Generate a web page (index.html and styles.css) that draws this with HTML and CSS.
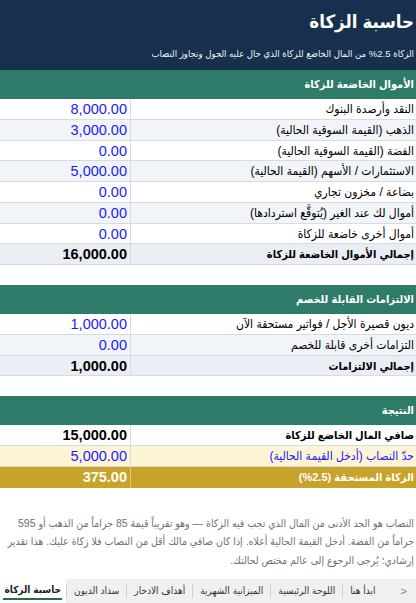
FILE: index.html
```html
<!DOCTYPE html>
<html lang="ar" dir="rtl">
<head>
<meta charset="utf-8">
<title>حاسبة الزكاة</title>
<link rel="stylesheet" href="styles.css">
</head>
<body>
<header class="hero">
  <h1 class="hero-title">حاسبة الزكاة</h1>
  <p class="hero-sub">الزكاة 2.5% من المال الخاضع للزكاة الذي حال عليه الحول وتجاوز النصاب</p>
</header>

<section class="block">
  <div class="block-head">الأموال الخاضعة للزكاة</div>
  <div class="row"><span class="label">النقد وأرصدة البنوك</span><span class="val input">8,000.00</span></div>
  <div class="row alt"><span class="label">الذهب (القيمة السوقية الحالية)</span><span class="val input">3,000.00</span></div>
  <div class="row"><span class="label">الفضة (القيمة السوقية الحالية)</span><span class="val input">0.00</span></div>
  <div class="row alt"><span class="label">الاستثمارات / الأسهم (القيمة الحالية)</span><span class="val input">5,000.00</span></div>
  <div class="row"><span class="label">بضاعة / مخزون تجاري</span><span class="val input">0.00</span></div>
  <div class="row alt"><span class="label">أموال لك عند الغير (يُتوقَّع استردادها)</span><span class="val input">0.00</span></div>
  <div class="row"><span class="label">أموال أخرى خاضعة للزكاة</span><span class="val input">0.00</span></div>
  <div class="row total"><span class="label">إجمالي الأموال الخاضعة للزكاة</span><span class="val">16,000.00</span></div>
</section>

<section class="block">
  <div class="block-head">الالتزامات القابلة للخصم</div>
  <div class="row"><span class="label">ديون قصيرة الأجل / فواتير مستحقة الآن</span><span class="val input">1,000.00</span></div>
  <div class="row alt"><span class="label">التزامات أخرى قابلة للخصم</span><span class="val input">0.00</span></div>
  <div class="row total"><span class="label">إجمالي الالتزامات</span><span class="val">1,000.00</span></div>
</section>

<section class="block">
  <div class="block-head">النتيجة</div>
  <div class="row net"><span class="label">صافي المال الخاضع للزكاة</span><span class="val">15,000.00</span></div>
  <div class="row nisab"><span class="label">حدّ النصاب (أدخل القيمة الحالية)</span><span class="val input">5,000.00</span></div>
  <div class="row due"><span class="label">الزكاة المستحقة (2.5%)</span><span class="val">375.00</span></div>
</section>

<p class="note">النصاب هو الحد الأدنى من المال الذي تجب فيه الزكاة — وهو تقريباً قيمة 85 جراماً من الذهب أو 595 جراماً من الفضة. أدخل القيمة الحالية أعلاه. إذا كان صافي مالك أقل من النصاب فلا زكاة عليك. هذا تقدير إرشادي؛ يُرجى الرجوع إلى عالم مختص لحالتك.</p>

<nav class="tabs">
  <span class="tab-arrow">&lt;</span>
  <span class="tab">ابدأ هنا</span>
  <span class="tab">اللوحة الرئيسية</span>
  <span class="tab">الميزانية الشهرية</span>
  <span class="tab">أهداف الادخار</span>
  <span class="tab">سداد الديون</span>
  <span class="tab active">حاسبة الزكاة</span>
</nav>
</body>
</html>
```

FILE: styles.css
```css
* { box-sizing: border-box; }

html, body {
  margin: 0;
  padding: 0;
  width: 416px;
  height: 603px;
  overflow: hidden;
  background: #ffffff;
  font-family: "Liberation Sans", "DejaVu Sans Condensed", "DejaVu Sans", sans-serif;
  color: #000;
}

body {
  display: flex;
  flex-direction: column;
}

.hero {
  background: #17304d;
  color: #ffffff;
  height: 70px;
  padding: 8px 2px 0 0;
}

.hero-title {
  margin: 0;
  font-size: 18.5px;
  font-weight: bold;
  line-height: 28px;
}

.hero-sub {
  margin: 10px 0 0 0;
  font-size: 9.5px;
  line-height: 16px;
  color: #f2f4f7;
  white-space: nowrap;
}

.block {
  display: flex;
  flex-direction: column;
  margin-bottom: 20px;
}

.block-head {
  background: #2e7b6a;
  color: #ffffff;
  height: 29px;
  font-size: 11px;
  font-weight: bold;
  line-height: 29px;
  padding-right: 2px;
}

.row {
  display: grid;
  grid-template-columns: 1fr 130px;
  height: 20.75px;
  border-bottom: 1px solid #d6dce4;
  background: #ffffff;
}

.row.alt { background: #f1f4f8; }
.row.total { background: #e9eef4; font-weight: bold; }

.label {
  font-size: 12px;
  line-height: 20px;
  padding-right: 2px;
  white-space: nowrap;
  overflow: hidden;
  border-left: 1px solid #d6dce4;
}

.row.total .label,
.row.net .label,
.row.due .label { font-size: 11px; }

.val {
  font-size: 14.5px;
  line-height: 20px;
  text-align: right;
  padding-right: 3px;
  direction: ltr;
}

.val.input { color: #1a1aff; }

.row.net { font-weight: bold; background: #ffffff; }
.row.nisab { background: #fdf4d6; }
.row.nisab .label { color: #1a1aff; }
.row.due { background: #c9a22a; color: #ffffff; font-weight: bold; border-bottom-color: #c9a22a; }
.row.due .label { border-left-color: #e1c878; }

.note {
  margin: 6px 0 0 0;
  padding: 0 2px 0 6px;
  font-size: 10.5px;
  line-height: 18.5px;
  color: #707070;
  text-align: right;
}

.tabs {
  margin-top: auto;
  height: 24px;
  background: #f0f0f0;
  display: flex;
  align-items: center;
  padding-right: 9px;
  font-size: 10px;
  color: #333;
}

.tab-arrow {
  color: #888;
  font-size: 11px;
  margin-left: 18px;
}

.tab {
  padding: 0 7px;
  line-height: 14px;
  border-left: 1px solid #d0d0d0;
  white-space: nowrap;
}

.tab.active {
  background: #ffffff;
  font-weight: bold;
  color: #1e1e1e;
  border-left: none;
  height: 24px;
  line-height: 21px;
  position: relative;
  padding: 0 5px;
}

.tab.active::after {
  content: "";
  position: absolute;
  left: 4px;
  right: 4px;
  bottom: 3px;
  height: 2px;
  background: #1e7145;
}
```
